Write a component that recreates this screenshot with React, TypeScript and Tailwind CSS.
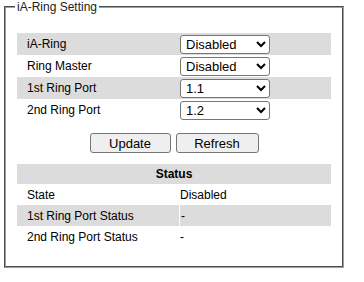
const settings = [
  { label: 'iA-Ring', value: 'Disabled', options: ['Disabled', 'Enabled'] },
  { label: 'Ring Master', value: 'Disabled', options: ['Disabled', 'Enabled'] },
  { label: '1st Ring Port', value: '1.1', options: ['1.1', '1.2', '1.3', '1.4'] },
  { label: '2nd Ring Port', value: '1.2', options: ['1.1', '1.2', '1.3', '1.4'] },
];

const status = [
  { label: 'State', value: 'Disabled' },
  { label: '1st Ring Port Status', value: '-' },
  { label: '2nd Ring Port Status', value: '-' },
];

export default function App() {
  return (
    <div className="w-[364px] h-[282px] bg-white text-black text-[12px] font-['Liberation_Sans',Arial,sans-serif]">
      <fieldset className="ml-[4px] w-[340px] h-[268px] border-2 [border-style:groove] border-[#a0a0a0] px-[11px] pb-[20px]">
        <legend className="-ml-[2px] px-[2px] leading-[14px] text-[#222]">iA-Ring Setting</legend>

        <div className="mt-[19px] flex flex-col">
          {settings.map((s, i) => (
            <div key={s.label} className={`flex h-[22px] items-center ${i % 2 === 0 ? 'bg-[#dcdcdc]' : ''}`}>
              <div className="w-[163px] pl-[10px]">{s.label}</div>
              <select
                defaultValue={s.value}
                className="w-[90px] h-[19px] border border-[#767676] rounded-[3px] bg-white text-[13px] pl-[1px]"
              >
                {s.options.map(o => (
                  <option key={o}>{o}</option>
                ))}
              </select>
            </div>
          ))}
        </div>

        <div className="mt-[12px] flex justify-center gap-[5px]">
          <button className="w-[81px] h-[20px] border border-[#767676] rounded-[3px] bg-[#efefef] text-[13px] leading-none">
            Update
          </button>
          <button className="w-[83px] h-[20px] border border-[#767676] rounded-[3px] bg-[#efefef] text-[13px] leading-none">
            Refresh
          </button>
        </div>

        <div className="mt-[11px] flex flex-col">
          <div className="h-[20px] flex items-center justify-center bg-[#dcdcdc] font-bold">Status</div>
          {status.map((s, i) => (
            <div key={s.label} className={`flex h-[21px] items-center ${i % 2 === 1 ? 'bg-[#dcdcdc]' : ''}`}>
              <div className="w-[162px] pl-[10px] h-full flex items-center">{s.label}</div>
              <div className={`flex-1 h-full flex items-center pl-[1px] ${i % 2 === 1 ? 'border-l border-white' : ''}`}>
                {s.value}
              </div>
            </div>
          ))}
        </div>
      </fieldset>
    </div>
  );
}
